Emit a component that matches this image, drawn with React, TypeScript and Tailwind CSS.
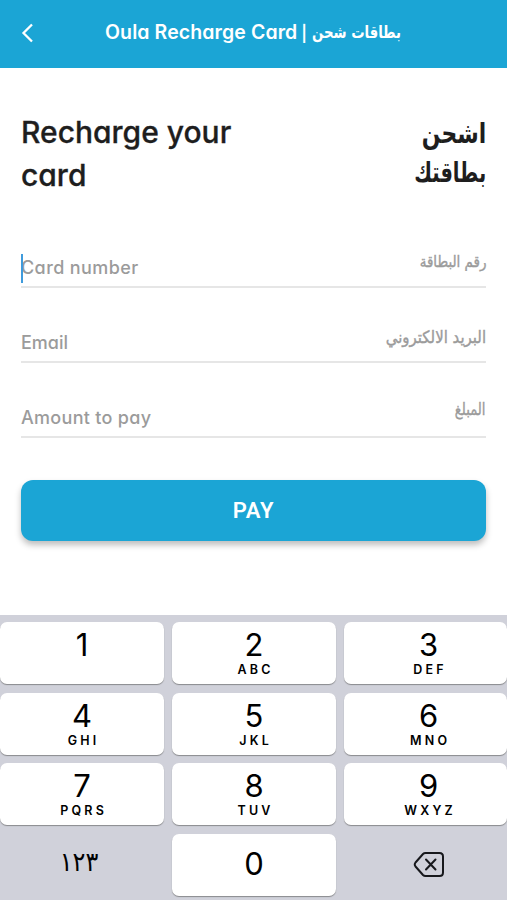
import React from 'react';
import clsx from 'clsx';

interface FieldProps {
    label: string;
    labelAr: string;
    labelClass: string;
    arClass: string;
    focused?: boolean;
}

const keys = [
    { digit: '1', letters: '' },
    { digit: '2', letters: 'ABC' },
    { digit: '3', letters: 'DEF' },
    { digit: '4', letters: 'GHI' },
    { digit: '5', letters: 'JKL' },
    { digit: '6', letters: 'MNO' },
    { digit: '7', letters: 'PQRS' },
    { digit: '8', letters: 'TUV' },
    { digit: '9', letters: 'WXYZ' },
];

const latin = "font-['Inter',sans-serif] [font-feature-settings:'cv11']";
const arabic = "font-['DejaVu_Sans',sans-serif]";

const Field: React.FC<FieldProps> = ({ label, labelAr, labelClass, arClass, focused }) => {
    return (
        <div className="h-[75px] flex justify-between items-end border-b-2 border-[#e6e6e6] text-[#9b9b9b]">
            <div className="relative h-[33px] flex items-center">
                {focused && <span className="absolute left-0 top-[1px] w-[2px] h-[29px] bg-[#3f9bdc]" />}
                <span className={clsx(latin, 'text-[18px] leading-[28px] pb-[4px] font-medium whitespace-nowrap', labelClass)}>{label}</span>
            </div>
            <span dir="rtl" className={clsx(arabic, 'origin-right leading-[28px] whitespace-nowrap [-webkit-text-stroke:0.4px_#9b9b9b]', arClass)}>
                {labelAr}
            </span>
        </div>
    );
};

const Key: React.FC<{ digit: string; letters: string }> = ({ digit, letters }) => {
    return (
        <button className="h-[62px] rounded-[7px] bg-white shadow-[0_1px_1px_#898a8d] flex flex-col items-center text-black font-['Inter',sans-serif] nth-[3n]:pl-[6px]">
            <span className="mt-[5px] h-[36px] leading-[36px] text-[31px]">{digit}</span>
            <span className="h-[14px] leading-[14px] text-[12.5px] font-semibold tracking-[3.2px] -mr-[3.2px]">{letters}</span>
        </button>
    );
};

const App: React.FC = () => {
    return (
        <div className="w-[507px] h-[900px] bg-white flex flex-col overflow-hidden">
            <header className="h-[68px] shrink-0 bg-[#1ba5d5] flex items-center text-white pb-[2px]">
                <svg className="ml-[21px] w-[13px] h-[20px]" viewBox="0 0 13 20" fill="none" stroke="currentColor" strokeWidth="2.3">
                    <path d="M11 1.5 2.5 10l8.500 8.500" />
                </svg>
                <h1 className="ml-[71px] flex items-center whitespace-nowrap">
                    <span className={clsx(latin, 'text-[19.5px] font-semibold tracking-[0.100px]')}>Oula Recharge Card</span>
                    <span className={clsx(latin, 'ml-[4px] text-[16px] font-semibold')}>|</span>
                    <span dir="rtl" className={clsx(arabic, 'ml-[5px] text-[17px] font-bold origin-left scale-x-[0.78]')}>
                        بطاقات شحن
                    </span>
                </h1>
            </header>

            <main className="h-[547px] shrink-0 px-[21px]">
                <div className="h-[145px] pt-[44px] flex justify-between items-start text-[#1e1e1e]">
                    <h2 className={clsx(latin, 'text-[30px] leading-[43px] font-medium -mt-[1px] [-webkit-text-stroke:0.3px_#1e1e1e] whitespace-nowrap')}>
                        Recharge your
                        <br />
                        card
                    </h2>
                    <h2 dir="rtl" className={clsx(arabic, 'pt-[2px] text-[28px] leading-[39px] font-bold whitespace-nowrap')}>
                        <span className="block origin-right scale-x-[0.78]">اشحن</span>
                        <span className="block origin-right scale-x-[0.69]">بطاقتك</span>
                    </h2>
                </div>

                <Field label="Card number" labelAr="رقم البطاقة" labelClass="tracking-[0.4px]" arClass="text-[16px] pb-[10px] scale-x-[0.84]" focused />
                <Field label="Email" labelAr="البريد الالكتروني" labelClass="" arClass="text-[17px] pb-[10px] scale-x-[0.88]" />
                <Field label="Amount to pay" labelAr="المبلغ" labelClass="tracking-[0.3px]" arClass="text-[17px] pb-[13px] scale-x-[0.78]" />

                <button className="mt-[42px] w-full h-[61px] rounded-[12px] bg-[#1ba5d5] text-white text-[22px] font-semibold tracking-[0.8px] font-['Roboto',sans-serif] shadow-[0_4px_6px_rgba(0,0,0,0.26)]">
                    PAY
                </button>
            </main>

            <section className="h-[285px] shrink-0 bg-[#d0d1da] pt-[7px] grid grid-cols-[164px_164px_163px] auto-rows-[62px] gap-x-[8px] gap-y-[8.700px]">
                {keys.map((key) => (
                    <Key key={key.digit} digit={key.digit} letters={key.letters} />
                ))}
                <button className={clsx(arabic, 'pb-[6px] pr-[6px] text-[24px] text-black scale-y-[1.100]')}>١٢٣</button>
                <button className="h-[62px] pb-[1px] rounded-[7px] bg-white shadow-[0_1px_1px_#898a8d] flex items-center justify-center text-[31px] text-black font-['Inter',sans-serif]">
                    0
                </button>
                <button className="pl-[6px] flex items-center justify-center text-[#17181c]">
                    <svg className="w-[32px] h-[27px] mb-[2px]" viewBox="0 0 32 27" fill="none" stroke="currentColor" strokeWidth="2" strokeLinecap="round" strokeLinejoin="round">
                        <path d="M12.500 2H26.500Q30 2 30 5.500V21.500Q30 25 26.500 25H12.500Q11 25 10 24L2.500 15.500Q1 13.500 2.500 11.500L10 3Q11 2 12.500 2Z" />
                        <path d="M13 8.500 22.500 18.500M22.500 8.500 13 18.500" />
                    </svg>
                </button>
            </section>
        </div>
    );
};

export default App;
